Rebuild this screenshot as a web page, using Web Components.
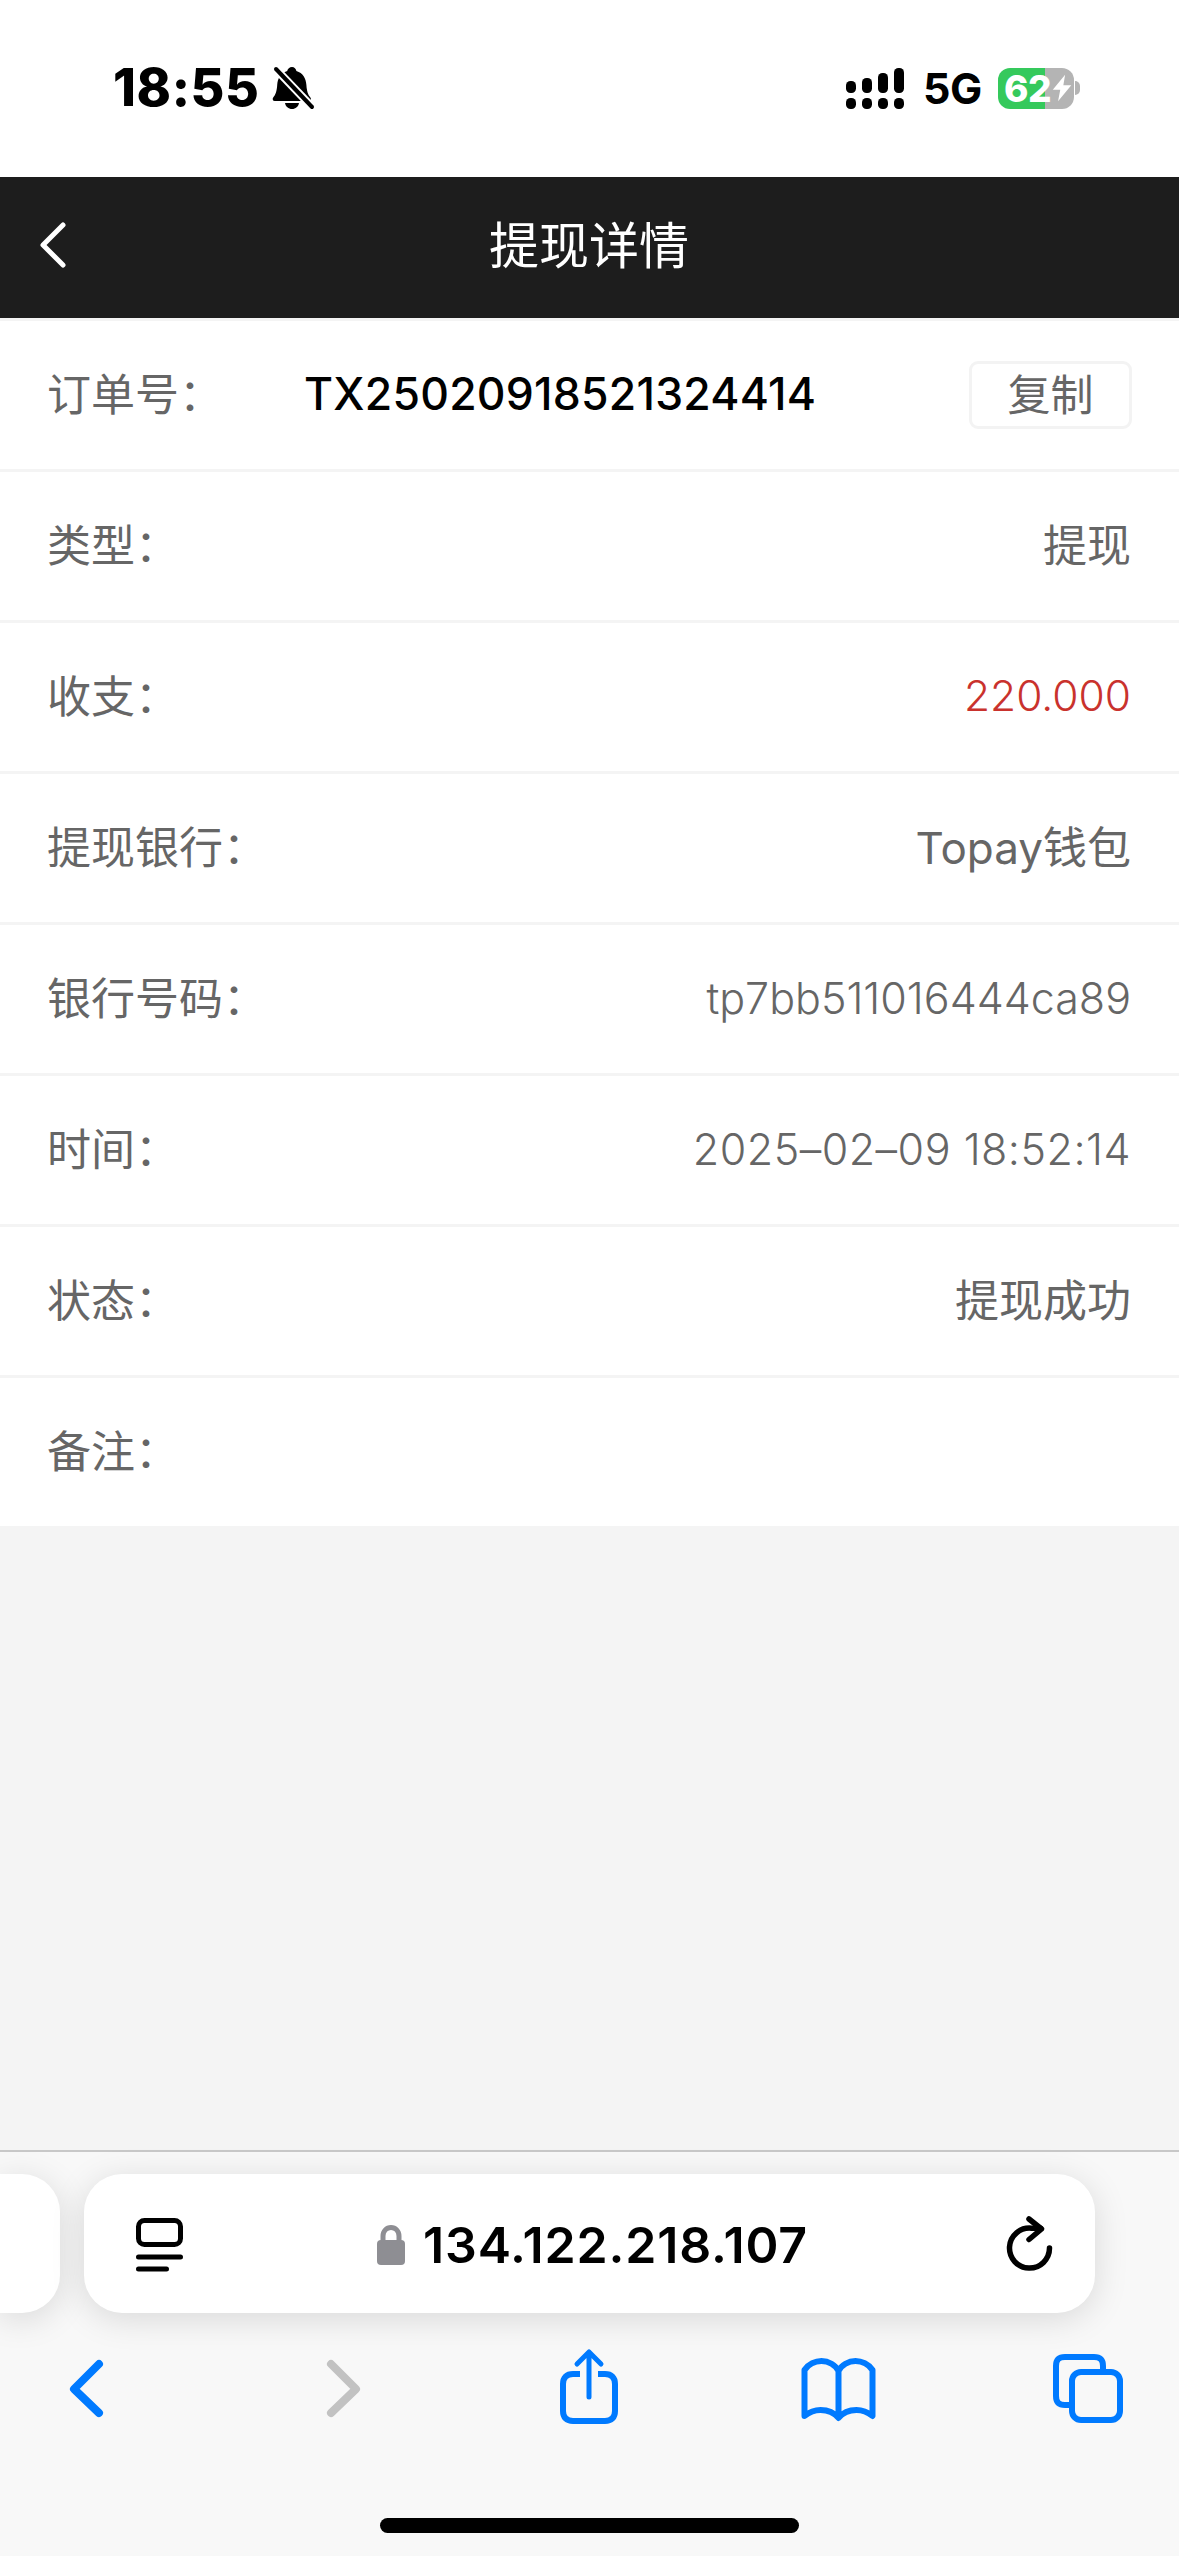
<!DOCTYPE html>
<html lang="zh-CN">
<head>
<meta charset="utf-8">
<title>提现详情</title>
<style>
html,body{margin:0;padding:0;background:#f4f4f4}
body{width:1179px;height:2556px;overflow:hidden;font-family:Inter,"Noto Sans CJK SC",sans-serif}
app-page{height:2556px}
</style>
</head>
<body>
<app-page>
  <status-bar></status-bar>
  <nav-bar>提现详情</nav-bar>
  <detail-list>
    <order-row label="订单号：" number="TX25020918521324414"></order-row>
    <detail-row label="类型：">提现</detail-row>
    <detail-row label="收支：" tone="red" latin>220.000</detail-row>
    <detail-row label="提现银行：">Topay钱包</detail-row>
    <detail-row label="银行号码：" latin>tp7bb511016444ca89</detail-row>
    <detail-row label="时间：" latin style="--track:.5px">2025–02–09 18:52:14</detail-row>
    <detail-row label="状态：">提现成功</detail-row>
    <detail-row label="备注："></detail-row>
  </detail-list>
  <browser-toolbar url="134.122.218.107"></browser-toolbar>
</app-page>
<script>
const def=(name,css,html)=>{
  customElements.define(name,class extends HTMLElement{
    constructor(){super();const r=this.attachShadow({mode:'open'});
      r.innerHTML='<style>'+css+'</style>'+html;}
    connectedCallback(){
      this.shadowRoot.querySelectorAll('[data-attr]').forEach(n=>{n.textContent=this.getAttribute(n.dataset.attr)||''});
    }
  });
};
const FONT='Inter,"Noto Sans CJK SC",sans-serif';
def('app-page',`:host{display:flex;flex-direction:column;width:1179px;background:#f4f4f4}`,`<slot></slot>`);

def('status-bar',`
:host{display:flex;align-items:center;box-sizing:border-box;height:177px;padding:60px 0 61px 113px;background:#fff;color:#000;font-family:${FONT}}
.time{font-size:52px;font-weight:800;line-height:56px;width:144px;letter-spacing:.6px;white-space:nowrap}
svg{display:block;flex:none}
.bell{margin-left:13px}
.sig{margin-left:530px}
.net{font-size:43px;font-weight:700;line-height:56px;margin-left:19px;width:56px;white-space:nowrap;letter-spacing:-.6px}
battery-icon{margin-left:19px}
`,`
<span class="time">18:55</span>
<svg class="bell" width="46" height="48" viewBox="270 64 46 48">
  <path fill="#000" d="M292 67c2.400 0 4 1.700 4.400 4 6.600 2 9.600 7.500 10 14 .4 6 1.500 9.500 4 12.500 1 1.300.6 3.500-1.600 3.500h-34c-2.200 0-2.600-2.200-1.600-3.500 2.500-3 3.600-6.500 4-12.500.4-6.500 3.400-12 10-14 .4-2.300 2.400-4 4.800-4z"/>
  <path fill="#000" d="M285 103h14c-.6 3.500-3.400 6-7 6s-6.400-2.500-7-6z"/>
  <path stroke="#fff" stroke-width="8" d="M272 65l42 44"/>
  <path stroke="#000" stroke-width="4" stroke-linecap="round" d="M276 69l36 38"/>
</svg>
<svg class="sig" width="58" height="41" viewBox="846 67 58 41" fill="#000">
  <rect x="846" y="80" width="10" height="12" rx="4.500"/><rect x="862" y="77" width="10" height="15" rx="4.500"/><rect x="878" y="72" width="10" height="20" rx="4.500"/><rect x="894" y="67" width="10" height="25" rx="4.500"/>
  <rect x="846" y="97" width="10" height="11" rx="4.500"/><rect x="862" y="97" width="10" height="11" rx="4.500"/><rect x="878" y="97" width="10" height="11" rx="4.500"/><rect x="894" y="97" width="10" height="11" rx="4.500"/>
</svg>
<span class="net">5G</span>
<battery-icon></battery-icon>
`);

def('battery-icon',`
:host{display:flex;align-items:center;font-family:${FONT}}
.body{display:flex;align-items:center;box-sizing:border-box;width:76px;height:41px;padding-left:6px;border-radius:12px;background:linear-gradient(90deg,#35c95c 0 47px,#b4b4b4 47px);color:#fff;font-size:37px;font-weight:800;line-height:41px;letter-spacing:-.5px}
svg{display:block}
.nub{width:5px;height:14px;margin-left:1px;border-radius:0 5px 5px 0;background:#b4b4b4}
`,`<div class="body"><span>62</span><svg width="26" height="32" viewBox="0 0 26 32"><path fill="#fff" d="M16 1L2 18h8.500L8 31l15-18h-9z"/></svg></div><div class="nub"></div>`);

def('nav-bar',`
:host{display:flex;align-items:center;justify-content:center;height:141px;background:#1d1d1d;color:#fff;position:relative;font-family:${FONT}}
.t{font-size:50px;line-height:60px;margin:-3px 1px 0 0;font-weight:400}
svg{position:absolute;left:36px;top:40px}
`,`<svg width="34" height="54" viewBox="36 217 34 54"><path fill="none" stroke="#fff" stroke-width="5" stroke-linecap="round" stroke-linejoin="round" d="M63 225L43 245l20 20"/></svg><span class="t"><slot></slot></span>`);

def('detail-list',`:host{display:flex;flex-direction:column;gap:3px;padding-top:3px}`,`<slot></slot>`);

const rowCss=`
:host{display:flex;align-items:center;box-sizing:border-box;height:148px;padding:0 48px 0 47px;background:#fff;color:#666;font-family:${FONT};font-size:44px;font-weight:400;white-space:nowrap}
.l{flex:none;margin-bottom:7px}
`;
def('detail-row',rowCss+`
.v{flex:1;text-align:right;margin-bottom:6px}
:host([latin]) .v{font-size:43px;font-weight:350;margin-bottom:3px;letter-spacing:var(--track,0)}
:host([tone=red]) .v{color:#c9322d;font-size:42.500px}
`,`<span class="l" data-attr="label"></span><span class="v"><slot></slot></span>`);

def('order-row',rowCss+`
.l{width:257px}
.n{flex:1;color:#000;font-weight:500;font-size:44.500px;letter-spacing:.25px;margin-bottom:3px}
copy-button{margin-right:-1px}
`,`<span class="l" data-attr="label"></span><span class="n" data-attr="number"></span><copy-button>复制</copy-button>`);

def('copy-button',`
:host{display:flex;align-items:center;justify-content:center;box-sizing:border-box;width:163px;height:68px;padding-bottom:6px;border:3px solid #f3f3f3;border-radius:9px;color:#666;font-size:43px}
`,`<slot></slot>`);

def('browser-toolbar',`
:host{display:flex;flex-direction:column;box-sizing:border-box;height:406px;margin-top:auto;border-top:2px solid #c8c8c8;background:#f8f8f8;color:#000;font-family:${FONT}}
.pills{display:flex;gap:24px;padding-top:22px;height:139px}
.stub{width:60px;background:#fff;border-radius:0 38px 38px 0;box-shadow:0 6px 34px rgba(0,0,0,.13)}
.pill{display:flex;align-items:center;width:1011px;background:#fff;border-radius:38px;box-shadow:0 6px 34px rgba(0,0,0,.13)}
.pill svg{display:block;flex:none}
.tabs{margin-left:52px;margin-top:2px}
.lock{margin-left:194px;margin-top:2px}
.url{margin-left:18px;width:383px;font-size:50px;font-weight:600;line-height:56px;white-space:nowrap;letter-spacing:.85px;margin-top:2px}
.reload{margin-left:199px;margin-top:0}
.tools{display:flex;padding-top:33px;padding-left:60px}
.tools svg{display:block;flex:none}
.home{width:419px;height:15px;border-radius:8px;background:#000;margin:92px 0 0 380px}
`,`
<div class="pills"><div class="stub"></div>
<div class="pill">
  <svg class="tabs" width="47" height="60" viewBox="136 2214 47 60" fill="none" stroke="#000" stroke-linecap="round">
    <rect x="138.500" y="2219.500" width="42" height="24" rx="6" stroke-width="5"/>
    <path stroke-width="5" d="M138.500 2256h42M138.500 2268h28"/>
  </svg>
  <svg class="lock" width="28" height="40" viewBox="377 2222 28 40">
    <path fill="none" stroke="#8e8e93" stroke-width="5" d="M383 2241v-8c0-5 3.500-8.500 8-8.500s8 3.500 8 8.500v8"/>
    <rect x="377" y="2237" width="28" height="25" rx="4" fill="#8e8e93"/>
  </svg>
  <span class="url" data-attr="url"></span>
  <svg class="reload" width="50" height="58" viewBox="1005 2212 50 58" fill="none" stroke="#000" stroke-width="5.500" stroke-linecap="round" stroke-linejoin="round">
    <path d="M1049.500 2245a20 20 0 1 1-18-19.800h9"/>
    <path d="M1029 2216l12.500 10-12.500 10.500"/>
  </svg>
</div></div>
<div class="tools">
  <svg width="53" height="80" viewBox="60 2345 53 80" fill="none" stroke="#007aff" stroke-width="8" stroke-linecap="round" stroke-linejoin="round"><path d="M99 2363l-25 25 25 24"/></svg>
  <svg style="margin-left:204px" width="53" height="80" viewBox="317 2345 53 80" fill="none" stroke="#c2c2c2" stroke-width="8" stroke-linecap="round" stroke-linejoin="round"><path d="M331 2363l25 25-25 24"/></svg>
  <svg style="margin-left:185px" width="68" height="80" viewBox="555 2345 68 80" fill="none" stroke="#007aff" stroke-width="6" stroke-linecap="round" stroke-linejoin="round">
    <path stroke-linecap="butt" d="M580 2373h-7c-6.500 0-10 3.500-10 10v27c0 6.500 3.500 10 10 10h32c6.500 0 10-3.500 10-10v-27c0-6.500-3.500-10-10-10h-7"/>
    <path stroke-width="5" d="M589 2396v-45M577 2363l12-12 12 12"/>
  </svg>
  <svg style="margin-left:174px" width="83" height="80" viewBox="797 2345 83 80" fill="none" stroke="#007aff" stroke-width="6" stroke-linecap="round" stroke-linejoin="round">
    <path d="M838.500 2370c-3-6-10-10-17-10-6 0-13 3-17 9v46c5-4 10-6 16-6 8 0 14 3 18 8 4-5 10-8 18-8 6 0 11 2 16 6v-46c-4-6-11-9-17-9-7 0-14 4-17 10v46"/>
  </svg>
  <svg style="margin-left:168px" width="80" height="80" viewBox="1048 2345 80 80" fill="none" stroke="#007aff" stroke-width="6" stroke-linejoin="round">
    <path d="M1103 2368v-3c0-6.500-3-9-9-9h-29c-6.500 0-9 3-9 9v30c0 6.500 3 9 9 9h6"/>
    <rect x="1072" y="2371" width="48" height="48" rx="9"/>
  </svg>
</div>
<div class="home"></div>
`);
</script>
</body>
</html>
